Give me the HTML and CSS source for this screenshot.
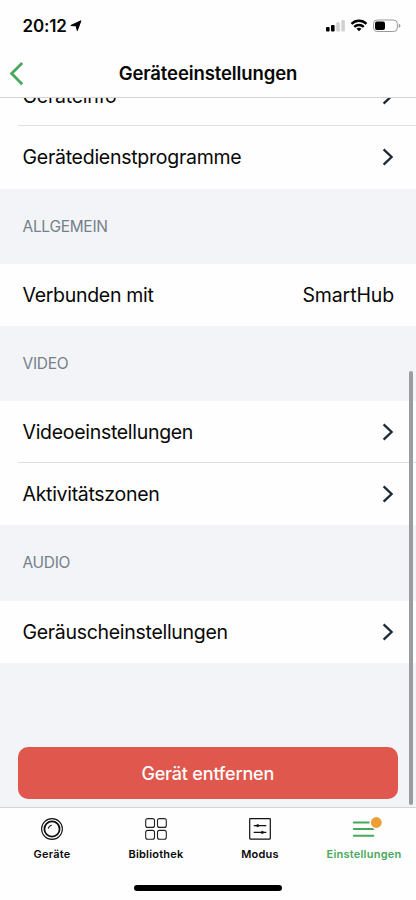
FILE: index.html
```html
<!DOCTYPE html>
<html lang="de">
<head>
<meta charset="utf-8">
<meta name="viewport" content="width=device-width, initial-scale=1">
<title>Geräteeinstellungen</title>
<link rel="stylesheet" href="styles.css">
</head>
<body>
<div class="phone">
  <header class="top">
    <div class="status">
      <span class="time">20:12</span>
      <svg class="locate" width="12" height="12" viewBox="0 0 12 12"><path d="M10.9.8 7.3 10.6 6.2 5.9.8 5.5Z" fill="#000" stroke="#000" stroke-width="1" stroke-linejoin="round"/></svg>
      <svg class="indicators" width="76" height="14" viewBox="0 0 76 14">
        <rect x="1" y="8" width="3.6" height="4.5" rx="1"/>
        <rect x="6" y="6" width="3.6" height="6.5" rx="1"/>
        <rect x="11.2" y="3.2" width="3.6" height="9.3" rx="1" fill="#d2d2d2"/>
        <rect x="16.3" y="1" width="3.6" height="11.5" rx="1" fill="#d2d2d2"/>
        <g fill="none" stroke="#000" stroke-width="2.3"><path d="M26.5 4.8a10.8 10.8 0 0 1 15 0"/><path d="M29.2 7.9a7 7 0 0 1 9.6 0"/></g>
        <path d="M34 12.3 31.5 9.8a3.8 3.8 0 0 1 5 0Z"/>
        <rect x="48.5" y="1" width="23.8" height="11.5" rx="3.6" fill="none" stroke="#999"/>
        <rect x="50" y="2.5" width="10" height="8.5" rx="2"/>
        <path d="M73.7 4.7q1.8.7 1.8 2.1t-1.8 2.1Z" fill="#999"/>
      </svg>
    </div>
    <div class="nav">
      <svg class="back" width="16" height="26" viewBox="0 0 16 26"><path d="M13.2 1.9 2.6 12.6l10.6 10.7" fill="none" stroke="#48a85b" stroke-width="2.8"/></svg>
      <h1>Geräteeinstellungen</h1>
    </div>
  </header>

  <main class="content">
    <div class="row clipped"><span>Geräteinfo</span><svg class="chevron" viewBox="0 0 12 18"><path d="m1.6 1.4 8 7.6-8 7.6"/></svg></div>
    <div class="row divided first"><span>Gerätedienstprogramme</span><svg class="chevron" viewBox="0 0 12 18"><path d="m1.6 1.4 8 7.6-8 7.6"/></svg></div>
    <h2>ALLGEMEIN</h2>
    <div class="row hub"><span>Verbunden mit</span><span class="value">SmartHub</span></div>
    <h2>VIDEO</h2>
    <div class="row video"><span>Videoeinstellungen</span><svg class="chevron" viewBox="0 0 12 18"><path d="m1.6 1.4 8 7.6-8 7.6"/></svg></div>
    <div class="row divided zones"><span>Aktivitätszonen</span><svg class="chevron" viewBox="0 0 12 18"><path d="m1.6 1.4 8 7.6-8 7.6"/></svg></div>
    <h2 class="audio">AUDIO</h2>
    <div class="row"><span>Geräuscheinstellungen</span><svg class="chevron" viewBox="0 0 12 18"><path d="m1.6 1.4 8 7.6-8 7.6"/></svg></div>
    <button class="remove">Gerät entfernen</button>
    <div class="scrollbar"></div>
  </main>

  <footer class="tabs">
    <div class="tab">
      <svg width="24" height="24" viewBox="0 0 24 24" fill="none" stroke="#111"><circle cx="12" cy="12" r="10.4" stroke-width="1.1"/><circle cx="12" cy="12" r="7.6" stroke-width="1.8"/><path d="M8.4 11.2q.5-2.4 3-3" stroke-width="1.1" stroke-linecap="round"/></svg>
      <span>Geräte</span>
    </div>
    <div class="tab">
      <svg width="24" height="24" viewBox="0 0 24 24" fill="none" stroke="#222" stroke-width="1.1"><rect x="1.7" y="1.6" width="8.8" height="8.8" rx="2"/><rect x="13.5" y="1.6" width="8.8" height="8.8" rx="2"/><rect x="1.7" y="13.4" width="8.8" height="8.8" rx="2"/><rect x="13.5" y="13.4" width="8.8" height="8.8" rx="2"/></svg>
      <span>Bibliothek</span>
    </div>
    <div class="tab">
      <svg width="24" height="24" viewBox="0 0 24 24" fill="none" stroke="#111"><rect x="1.7" y="1.7" width="20.6" height="20.4" rx=".5" stroke-width="1.2"/><path d="M5.7 8.6h12.6M5.7 15.4h12.6" stroke-width="1.2"/><circle cx="9.7" cy="8.6" r="1.2" fill="#111" stroke-width=".6"/><circle cx="14.3" cy="15.4" r="1.2" fill="#111" stroke-width=".6"/></svg>
      <span>Modus</span>
    </div>
    <div class="tab active">
      <svg width="34" height="24" viewBox="0 0 34 24"><path d="M6.8 5.4h15.4M6.8 12.1h19.6M6.8 18.7h19.6" fill="none" stroke="#48a85b" stroke-width="2" stroke-linecap="round"/><circle cx="29.3" cy="5.5" r="6.8" fill="#fefefe"/><circle cx="29.3" cy="5.5" r="5.4" fill="#ed9f35"/></svg>
      <span>Einstellungen</span>
    </div>
    <div class="home"></div>
  </footer>
</div>
</body>
</html>
```
FILE: styles.css
```css
* { box-sizing: border-box; }
body { margin: 0; font-family: Inter, "Liberation Sans", sans-serif; color: #080808; background: #fefefe; }
.phone { width: 416px; height: 900px; display: flex; flex-direction: column; overflow: hidden; }
svg { display: block; flex: none; overflow: visible; }

.top { height: 98px; flex: none; border-bottom: 1px solid #d4d4d5; background: #fefefe; }
.status { height: 50px; display: flex; align-items: center; padding: 2px 15px 0 22.5px; }
.time { font-size: 17px; font-weight: 600; letter-spacing: -.15px; line-height: 20px; }
.locate { margin-left: 3px; }
.indicators { margin-left: auto; }
.nav { height: 47px; display: grid; grid-template-columns: 40px 1fr 40px; align-items: center; }
.back { margin-left: 9px; }
h1 { margin: 0; padding-bottom: 2px; text-align: center; font-size: 18.5px; font-weight: 600; letter-spacing: -.1px; line-height: 26px; white-space: nowrap; }

.content { height: 709px; flex: none; overflow: hidden; position: relative; background: #f2f4f8; }
.row { height: 62px; display: flex; align-items: center; justify-content: space-between; padding: 0 22px 0 22.5px; background: #fefefe; font-size: 19.5px; letter-spacing: -.3px; line-height: 28px; white-space: nowrap; }
.clipped { margin-top: -35px; padding-top: 3px; letter-spacing: -.25px; }
.divided { height: 63px; background: linear-gradient(#dedfe0, #dedfe0) 18px 0 / 398px 1px no-repeat #fefefe; }
.first { height: 63.5px; padding-top: 1px; letter-spacing: -.26px; }
.hub { height: 61.5px; }
.video { height: 61px; padding-top: 1px; }
.zones { padding-top: 1px; }
.value { letter-spacing: -.12px; }
.chevron { width: 12px; height: 18px; fill: none; stroke: #1c2935; stroke-width: 2.3; }
h2 { margin: 0; height: 75.5px; padding: 0 22.5px; font-size: 15.5px; font-weight: 400; line-height: 75px; color: #758088; letter-spacing: -.3px; }
.audio { line-height: 76.5px; }
.remove { display: block; width: 380.5px; height: 52px; margin: 84px 0 0 17.5px; border: 0; border-radius: 10px; background: #df574d; color: #fefefe; font: 500 18px/52px Inter, sans-serif; letter-spacing: -.18px; padding: 1px 0 0; }
.scrollbar { position: absolute; top: 273px; right: 3px; width: 4px; height: 434px; border-radius: 2px; background: #9b9c9e; }

.tabs { height: 93px; flex: none; border-top: 1px solid #d2d3d5; background: #fefefe; display: grid; grid-template-columns: repeat(4, 104px); grid-template-rows: 77px 5px; }
.tab { display: flex; flex-direction: column; align-items: center; padding-top: 9px; font-size: 11px; font-weight: 600; letter-spacing: .23px; line-height: 16px; gap: 5px; }
.active { color: #48a85b; }
.home { grid-column: 1 / -1; justify-self: center; width: 148px; height: 6px; border-radius: 3px; background: #000; }
```
